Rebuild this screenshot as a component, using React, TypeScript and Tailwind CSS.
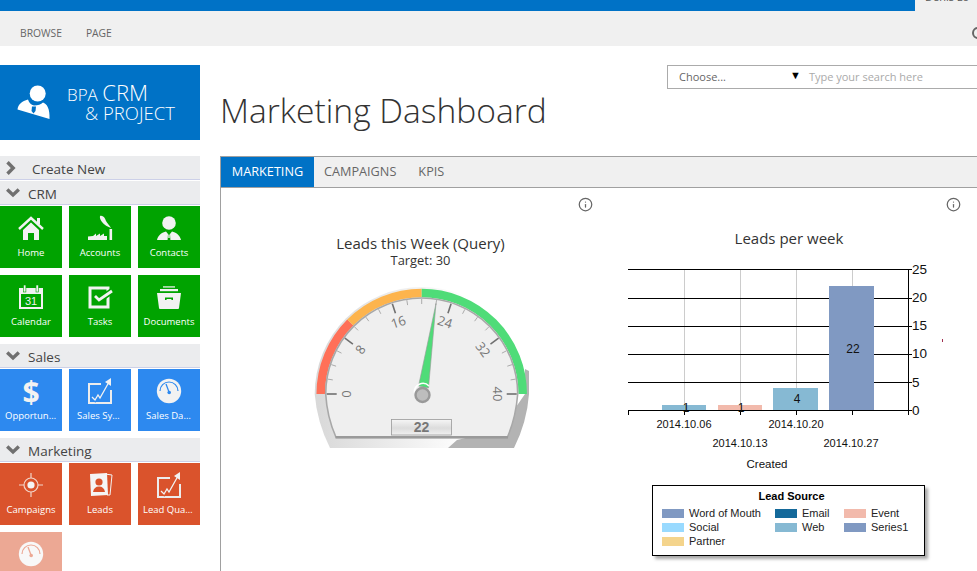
import React from 'react';
import { Info } from 'lucide-react';

const polar = (cx: number, cy: number, r: number, value: number) => {
  // value 0..40 sweeps the upper half of the dial, left to right
  const a = Math.PI - (value / 40) * Math.PI;
  return [cx + r * Math.cos(a), cy - r * Math.sin(a)];
};

const band = (from: number, to: number, r: number) => {
  const [x1, y1] = polar(421.7, 394, r, from);
  const [x2, y2] = polar(421.7, 394, r, to);
  return `M${x1} ${y1} A${r} ${r} 0 0 1 ${x2} ${y2}`;
};

function HomeIcon() {
  return (
    <svg width="28" height="28" viewBox="0 0 28 28" fill="#f2f2f2">
      <path d="M2 15 L14 4 L26 15" fill="none" stroke="#f2f2f2" strokeWidth="2.4" />
      <rect x="20" y="4" width="3" height="6" />
      <path d="M6 16 L14 8.5 L22 16 V26 H17 V19 H11 V26 H6Z" />
    </svg>
  );
}

function FactoryIcon() {
  return (
    <svg width="28" height="28" viewBox="0 0 28 28" fill="#f2f2f2">
      <path d="M2 26 V22.5 L7 22 L10 19.5 V22 L14 19.5 V22 L18 19.5 V22 L21 22 V26Z" />
      <rect x="23.5" y="15" width="2.6" height="11" />
      <path d="M14 2 C17 1 19 4 20 7 C21 9 23.5 11 25 14 C22 13 18 11 16 8 C14.5 6 13.5 4 14 2Z" />
    </svg>
  );
}

function ContactIcon() {
  return (
    <svg width="28" height="28" viewBox="0 0 28 28" fill="#f2f2f2">
      <circle cx="14" cy="9" r="6.8" />
      <path d="M2 26 C3 21 7 18.5 11 17.5 L13 20 L12.6 26Z M26 26 C25 21 21 18.5 17 17.5 L15 20 L15.4 26Z" />
      <rect x="13.3" y="20.5" width="1.4" height="3.5" />
    </svg>
  );
}

function CalendarIcon() {
  return (
    <svg width="28" height="28" viewBox="0 0 28 28" fill="#f2f2f2">
      <rect x="2" y="5" width="24" height="21" />
      <rect x="4" y="11" width="20" height="13" fill="#00a300" />
      <rect x="6.5" y="2" width="2.4" height="7" stroke="#00a300" strokeWidth="0.6" />
      <rect x="19" y="2" width="2.4" height="7" stroke="#00a300" strokeWidth="0.6" />
      <text x="14" y="22" fontSize="11" textAnchor="middle" fill="#f2f2f2" fontFamily="Liberation Sans">31</text>
    </svg>
  );
}

function TaskIcon() {
  return (
    <svg width="28" height="28" viewBox="0 0 28 28" fill="none">
      <rect x="4" y="5" width="18" height="19" stroke="#f2f2f2" strokeWidth="3" />
      <path d="M9 13 L13 17 L26 8" stroke="#00a300" strokeWidth="6" />
      <path d="M9 13 L13 17 L26 8" stroke="#f2f2f2" strokeWidth="2.8" />
    </svg>
  );
}

function DocsIcon() {
  return (
    <svg width="28" height="28" viewBox="0 0 28 28" fill="#f2f2f2">
      <rect x="8" y="3" width="12" height="1.8" opacity="0.7" />
      <rect x="5" y="6" width="18" height="2.2" />
      <path d="M2 10 H26 L24 25 Q24 26 23 26 H5 Q4 26 4 25Z" />
      <path d="M10 17 V14.6 H18 V17 H16.4 V16 H11.6 V17Z" fill="#00a300" />
    </svg>
  );
}

function GraphIcon({ color }: { color: string }) {
  return (
    <svg width="28" height="28" viewBox="0 0 28 28" fill="none">
      <path d="M15 7 H3 V26 H25 V13" stroke="#ececec" strokeWidth="2" />
      <path d="M6 20 L9 23 L12 18 L14 21 L23 5" stroke={color} strokeWidth="3.5" />
      <path d="M6 20 L9 23 L12 18 L14 21 L23 5" stroke="#f2f2f2" strokeWidth="1.3" />
      <path d="M19 5 L25 1 L25 9Z" fill="#f2f2f2" />
    </svg>
  );
}

function DialIcon({ color }: { color: string }) {
  return (
    <svg width="28" height="28" viewBox="0 0 28 28">
      <circle cx="14" cy="14" r="12.2" fill="#f2f2f2" />
      <path d="M5 14 A9 9 0 0 1 23 14" fill="none" stroke={color} strokeWidth="1.2" />
      <path d="M11 7 L14 15" stroke={color} strokeWidth="1.3" />
      <circle cx="14.2" cy="15.5" r="1.8" fill={color} />
    </svg>
  );
}

function TargetIcon() {
  return (
    <svg width="28" height="28" viewBox="0 0 28 28" fill="none" stroke="#f2d5ca" strokeWidth="1.2">
      <circle cx="14" cy="14" r="7" />
      <circle cx="14" cy="14" r="3.6" fill="#f5f5f5" stroke="none" />
      <path d="M14 2 V7 M14 21 V26 M2 14 H7 M21 14 H26" />
    </svg>
  );
}

function LeadsIcon() {
  return (
    <svg width="28" height="28" viewBox="0 0 28 28">
      <path d="M19 3 L26 4 L24 24 L21 24Z" fill="none" stroke="#f2f2f2" strokeWidth="1" />
      <path d="M4 3 L21 2 L22 24 L5 25Z" fill="#f5f5f5" />
      <circle cx="13" cy="11" r="3.6" fill="#da532c" />
      <path d="M7 21 Q8 15.5 13 15.5 Q18 15.5 19 21Z" fill="#da532c" />
    </svg>
  );
}

function Tile({ label, color, icon, faded, inset }: { label: string; color: string; icon: React.ReactNode; faded?: boolean; inset?: boolean }) {
  return (
    <div className={`${color} ${faded ? 'opacity-50' : ''} flex h-[62px] w-[62px] flex-col items-center overflow-hidden pt-[8px]`}>
      <div className="h-[30px] shrink-0">{icon}</div>
      <div className={`${inset ? 'px-[8px]' : 'px-[5px]'} mt-[2px] w-full truncate text-center text-[9.5px] leading-[14px] font-medium text-white`}>{label}</div>
    </div>
  );
}

function SideHeader({ label, open, mt }: { label: string; open?: boolean; mt?: string }) {
  return (
    <div className={`${mt ?? ''} flex h-[24px] items-center border-b border-[#ccd0e8] bg-[#ebecee] pl-[6px] text-[13.5px] text-[#444]`}>
      {open ? (
        <svg width="14" height="10" viewBox="0 0 14 10" fill="none" stroke="#707070" strokeWidth="3.4">
          <path d="M1.2 1.5 L7 7 L12.8 1.5" />
        </svg>
      ) : (
        <svg width="10" height="14" viewBox="0 0 10 14" fill="none" stroke="#707070" strokeWidth="3.4">
          <path d="M1.5 1.2 L7.2 7 L1.5 12.8" />
        </svg>
      )}
      <span className={open ? 'ml-[8px] pt-[4px]' : 'ml-[16px] pt-[4px]'}>{label}</span>
    </div>
  );
}

function Gauge() {
  const ticks = [];
  for (let v = 0; v <= 40; v += 2) {
    const major = v % 8 === 0;
    const [x1, y1] = polar(421.7, 394, 95, v);
    const [x2, y2] = polar(421.7, 394, major ? 85 : 90, v);
    ticks.push(<line key={v} x1={x1} y1={y1} x2={x2} y2={y2} stroke={major ? '#707070' : '#999'} strokeWidth={major ? 1.6 : 0.8} />);
  }
  const labels = [0, 8, 16, 24, 32, 40].map((v) => {
    const [x, y] = polar(421.7, 394, 76, v);
    return (
      <text key={v} x={x} y={y} fontSize="13" fill="#777" textAnchor="middle" dominantBaseline="central" transform={`rotate(${(v / 40) * 180 - 90} ${x} ${y})`}>
        {v}
      </text>
    );
  });
  return (
    <svg width="240" height="170" viewBox="300 285 240 170" className="mt-[17px] ml-[79px] block">
      <defs>
        <linearGradient id="rim" x1="0" x2="1" y1="0" y2="0">
          <stop offset="0" stopColor="#d8d8d8" />
          <stop offset="0.72" stopColor="#ffffff" />
        </linearGradient>
        <linearGradient id="box" x1="0" x2="0" y1="0" y2="1">
          <stop offset="0" stopColor="#f6f6f6" />
          <stop offset="0.55" stopColor="#dcdcdc" />
          <stop offset="1" stopColor="#f0f0f0" />
        </linearGradient>
      </defs>
      <path d="M314.7 394 A107 107 0 0 1 528.7 394 L528.7 394 Q527 422 514 448 H330 Q317 422 314.7 394Z" fill="url(#rim)" />
      <path d="M525 369 L529 371 V394 Q527 422 514 448 H448 L457 440 L500 430 L525 394Z" fill="#b3b3b3" />
      <path d={band(0, 10, 101)} fill="none" stroke="#ff7058" strokeWidth="8.5" />
      <path d={band(10, 20, 101)} fill="none" stroke="#fdb44d" strokeWidth="8.5" />
      <path d={band(20, 40, 101)} fill="none" stroke="#4fdc78" strokeWidth="8.5" />
      <path d="M325.7 394 A96 96 0 0 1 517.7 394 Q516 417 507.5 437 H335.9 Q327 417 325.7 394Z" fill="#efefef" stroke="#a8a8a8" strokeWidth="1.6" />
      <rect x="335.5" y="436" width="172.5" height="2.6" fill="#9a9a9a" />
      {ticks}
      {labels}
      <path d="M418.5 386 L436 303.5 L428.5 388Z" fill="#4fdc78" stroke="#999" strokeWidth="0.6" />
      <path d="M414.5 393 A8.5 8.5 0 0 1 429 386" fill="none" stroke="#fff" strokeWidth="1.6" />
      <circle cx="422.5" cy="395" r="7" fill="#bdbdbd" stroke="#999" strokeWidth="2.4" />
      <rect x="391.5" y="419.5" width="60" height="15.5" fill="url(#box)" stroke="#999" strokeWidth="0.8" />
      <text x="421.5" y="432" fontSize="14" fontWeight="700" fill="#777" textAnchor="middle" fontFamily="Liberation Sans">22</text>
    </svg>
  );
}

function BarChart() {
  const ys = [269.5, 298.5, 326.5, 354.5, 382.5];
  const xs = [628.5, 684.5, 740.5, 796.5, 852.5, 908.5];
  const bars = [
    { x: 662, w: 44, y: 405, fill: '#86b9d3', val: '1', lx: 686, ly: 412 },
    { x: 718, w: 44, y: 405, fill: '#f2baac', val: '1', lx: 741, ly: 412 },
    { x: 773, w: 45, y: 388, fill: '#86b9d3', val: '4', lx: 797, ly: 403 },
    { x: 829, w: 45, y: 286, fill: '#8099c2', val: '22', lx: 853, ly: 353 },
  ];
  const ticksY = [273.5, 302, 330, 358, 386.5, 414.5];
  return (
    <svg width="330" height="215" viewBox="620 260 330 215" className="ml-[23px] block" fontFamily="Liberation Sans">
      {xs.slice(1, 5).map((x) => (
        <line key={x} x1={x} x2={x} y1={269} y2={410} stroke="#cccccc" />
      ))}
      {ys.map((y) => (
        <line key={y} x1={628} x2={912} y1={y} y2={y} stroke="#000" />
      ))}
      {bars.map((b) => (
        <rect key={b.x} x={b.x} y={b.y} width={b.w} height={410 - b.y} fill={b.fill} />
      ))}
      <line x1={628} x2={912} y1={410.5} y2={410.5} stroke="#000" />
      <line x1={908.5} x2={908.5} y1={269} y2={414} stroke="#000" />
      {xs.map((x) => (
        <line key={x} x1={x} x2={x} y1={410} y2={415} stroke="#000" />
      ))}
      {bars.map((b) => (
        <text key={b.x} x={b.lx} y={b.ly} fontSize="12" textAnchor="middle" fill="#111">{b.val}</text>
      ))}
      {['25', '20', '15', '10', '5', '0'].map((t, i) => (
        <text key={t} x={912} y={ticksY[i]} fontSize="13.5" fill="#111">{t}</text>
      ))}
      <text x="684" y="428" fontSize="11" textAnchor="middle" fill="#111">2014.10.06</text>
      <text x="740" y="447" fontSize="11" textAnchor="middle" fill="#111">2014.10.13</text>
      <text x="796" y="428" fontSize="11" textAnchor="middle" fill="#111">2014.10.20</text>
      <text x="851" y="447" fontSize="11" textAnchor="middle" fill="#111">2014.10.27</text>
      <text x="767" y="468" fontSize="11.5" textAnchor="middle" fill="#111">Created</text>
      <rect x="942" y="339" width="1" height="3" fill="#a03050" />
    </svg>
  );
}

function LegendItem({ color, label, width }: { color: string; label: string; width: string }) {
  return (
    <div className={`${width} flex h-[14px] items-center gap-[5px]`}>
      <span className={`${color} h-[9px] w-[22px] shrink-0`} />
      <span className="whitespace-nowrap">{label}</span>
    </div>
  );
}

export default function App() {
  return (
    <div className="flex h-[571px] w-[977px] flex-col overflow-hidden bg-white [font-family:'Open_Sans',sans-serif]">
      <div className="h-[46px] shrink-0 bg-[#f0f0f0]">
        <div className="flex h-[11px]">
          <div className="w-[915px] bg-[#0072c6]" />
          <div className="-mt-[10px] pl-[10px] text-[11px] leading-[14px] whitespace-nowrap text-[#555]">Denis Lo</div>
        </div>
        <div className="flex items-center pt-[15px] pl-[20px] text-[10.3px] leading-[14px] text-[#666]">
          <span>BROWSE</span>
          <span className="ml-[24px]">PAGE</span>
          <span className="ml-auto -mr-[7px] h-[12px] w-[12px] rounded-full border-[2px] border-[#666]" />
        </div>
      </div>

      <div className="flex min-h-0 flex-1">
        <aside className="w-[200px] shrink-0 pt-[19px]">
          <div className="flex h-[75px] items-center bg-[#0072c6] pl-[17px] text-white">
            <svg width="34" height="36" viewBox="0 0 34 36" fill="#fff">
              <circle cx="20.7" cy="8.5" r="8" />
              <path d="M0.5 24.5 C1 19.5 5 16 11 14.5 C12 17.5 14 20 17 20.5 C21 20.5 24 19.5 26 17.5 C30 19 33 23.5 32.5 34 Z" />
              <path d="M15 21.5 L19 21.5 L18.5 26 L16.5 28.5 L14.5 26Z" fill="#0072c6" />
            </svg>
            <div className="ml-[16px] pb-[3px] font-light">
              <div className="text-[17px] leading-[22px]">
                BPA <span className="text-[22px]">CRM</span>
              </div>
              <div className="-mt-[3px] pl-[18px] text-[18.5px] leading-[19px]">&amp; PROJECT</div>
            </div>
          </div>

          <SideHeader label="Create New" mt="mt-[16px]" />
          <SideHeader label="CRM" open mt="mt-[1px]" />
          <div className="mt-[1px] grid grid-cols-3 gap-[7px]">
            <Tile label="Home" color="bg-[#00a300]" icon={<HomeIcon />} />
            <Tile label="Accounts" color="bg-[#00a300]" icon={<FactoryIcon />} />
            <Tile label="Contacts" color="bg-[#00a300]" icon={<ContactIcon />} />
            <Tile label="Calendar" color="bg-[#00a300]" icon={<CalendarIcon />} />
            <Tile label="Tasks" color="bg-[#00a300]" icon={<TaskIcon />} />
            <Tile label="Documents" color="bg-[#00a300]" icon={<DocsIcon />} />
          </div>

          <SideHeader label="Sales" open mt="mt-[7px]" />
          <div className="mt-[1px] grid grid-cols-3 gap-[7px]">
            <Tile label="Opportunities" color="bg-[#2d89ef]" icon={<div className="text-[30px] leading-[30px] font-bold text-[#f2f2f2]">$</div>} />
            <Tile label="Sales Synopsis" color="bg-[#2d89ef]" inset icon={<GraphIcon color="#2d89ef" />} />
            <Tile label="Sales Dashboard" color="bg-[#2d89ef]" inset icon={<DialIcon color="#2d89ef" />} />
          </div>

          <SideHeader label="Marketing" open mt="mt-[7px]" />
          <div className="mt-[1px] grid grid-cols-3 gap-[7px]">
            <Tile label="Campaigns" color="bg-[#da532c]" icon={<TargetIcon />} />
            <Tile label="Leads" color="bg-[#da532c]" icon={<LeadsIcon />} />
            <Tile label="Lead Quality" color="bg-[#da532c]" icon={<GraphIcon color="#da532c" />} />
            <Tile label="Dashboard" color="bg-[#da532c]" icon={<DialIcon color="#da532c" />} faded />
          </div>
        </aside>

        <main className="ml-[20px] min-w-0 flex-1">
          <div className="relative h-[110px]">
            <div className="absolute top-[19px] left-[447px] flex h-[24px] w-[320px] items-center border border-[#ababab] text-[11px]">
              <span className="w-[122px] pl-[11px] text-[#666]">Choose...</span>
              <span className="-mt-[5px] text-[11px] leading-none text-black">▼</span>
              <span className="ml-[8px] text-[#aaa]">Type your search here</span>
            </div>
            <h1 className="pt-[44px] text-[33.6px] leading-[40px] font-light text-[#333]">Marketing Dashboard</h1>
          </div>

          <div className="flex h-[32px] w-[770px] border border-r-0 border-[#a0a0a0] bg-[#f0f0f0] text-[12.7px]">
            <div className="flex w-[93px] items-center justify-center bg-[#0072c6] text-white">MARKETING</div>
            <div className="ml-[10px] flex items-center text-[#666]">CAMPAIGNS</div>
            <div className="ml-[22px] flex items-center text-[#666]">KPIS</div>
          </div>

          <div className="flex h-[400px] border-l border-[#a0a0a0]">
            <section className="w-[376px] shrink-0">
              <div className="flex justify-end pt-[9px] pr-[4px]">
                <Info size={15} className="text-[#666]" />
              </div>
              <div className="mt-[21px] pl-[23px] text-center text-[15px] leading-[20px] text-[#333]">Leads this Week (Query)</div>
              <div className="pl-[23px] text-center text-[12.9px] leading-[15px] text-[#333]">Target: 30</div>
              <Gauge />
            </section>
            <section className="w-[380px] shrink-0">
              <div className="flex justify-end pt-[9px] pr-[16px]">
                <Info size={15} className="text-[#666]" />
              </div>
              <div className="mt-[16px] pl-[4px] text-center text-[15px] leading-[20px] text-[#333]">Leads per week</div>
              <div className="mt-[12px]">
                <BarChart />
              </div>
              <div className="mt-[10px] ml-[55px] h-[71px] w-[273px] border border-black px-[9px] pt-[3px] text-[11px] leading-[14px] text-[#222] shadow-[3px_3px_3px_rgba(0,0,0,0.35)] [font-family:'Liberation_Sans',sans-serif]">
                <div className="pb-[3px] pl-[6px] text-center font-bold text-black">Lead Source</div>
                <div className="flex flex-wrap">
                  <LegendItem color="bg-[#8099c2]" label="Word of Mouth" width="w-[113px]" />
                  <LegendItem color="bg-[#14699a]" label="Email" width="w-[69px]" />
                  <LegendItem color="bg-[#f2baac]" label="Event" width="w-[70px]" />
                  <LegendItem color="bg-[#99daff]" label="Social" width="w-[113px]" />
                  <LegendItem color="bg-[#86b9d3]" label="Web" width="w-[69px]" />
                  <LegendItem color="bg-[#8099c2]" label="Series1" width="w-[70px]" />
                  <LegendItem color="bg-[#f4d48c]" label="Partner" width="w-[113px]" />
                </div>
              </div>
            </section>
          </div>
        </main>
      </div>
    </div>
  );
}
